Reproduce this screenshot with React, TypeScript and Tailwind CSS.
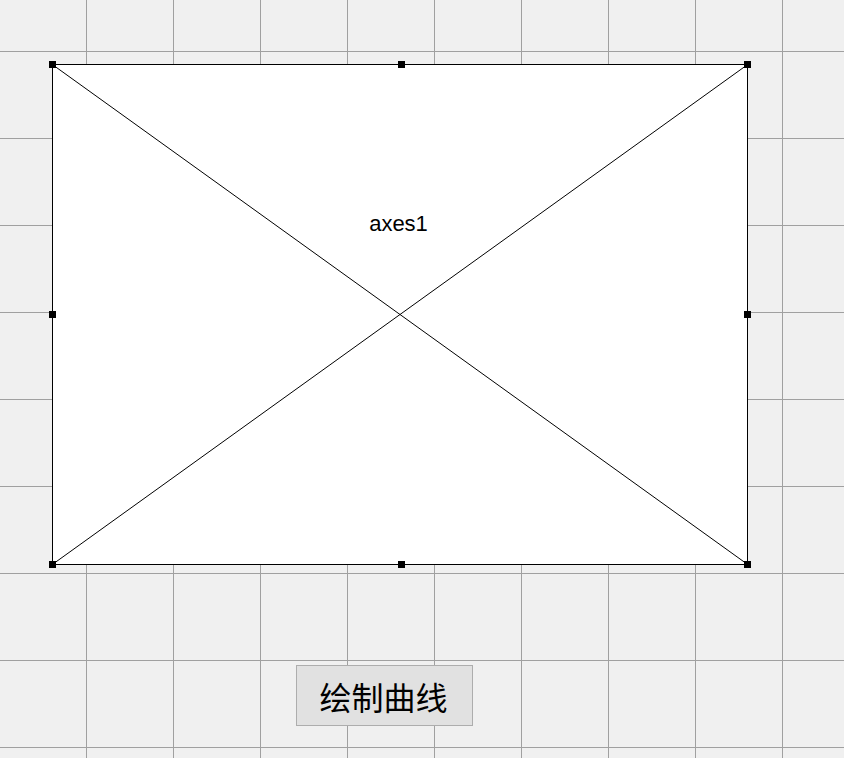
const HANDLES = [
  "left-[-4px] top-[-4px]",
  "left-[345px] top-[-4px]",
  "right-[-4px] top-[-4px]",
  "left-[-4px] top-[246px]",
  "right-[-4px] top-[246px]",
  "left-[-4px] bottom-[-4px]",
  "left-[345px] bottom-[-4px]",
  "right-[-4px] bottom-[-4px]",
];

function Axes() {
  return (
    <div className="absolute left-[52px] top-[64px] h-[501px] w-[696px] border border-black bg-white">
      <svg className="absolute inset-0 h-full w-full" viewBox="0 0 694 499" preserveAspectRatio="none">
        <line x1="0" y1="0" x2="694" y2="499" stroke="#000" strokeWidth="1" />
        <line x1="694" y1="0" x2="0" y2="499" stroke="#000" strokeWidth="1" />
      </svg>
      <div className="absolute left-0 right-0 top-[148px] pr-[3px] text-center font-['Liberation_Sans',Arial,sans-serif] text-[22px] leading-none text-black">
        axes1
      </div>
      {HANDLES.map((pos) => (
        <div key={pos} className={`absolute h-[7px] w-[7px] bg-black ${pos}`} />
      ))}
    </div>
  );
}

export default function App() {
  return (
    <div className="relative h-[758px] w-[844px] overflow-hidden bg-[#f0f0f0] bg-[linear-gradient(to_right,#a0a0a0_1px,transparent_1px),linear-gradient(to_bottom,#a0a0a0_1px,transparent_1px)] bg-[size:87px_87px] bg-[position:86px_51px]">
      <Axes />
      <button className="absolute left-[296px] top-[665px] flex h-[61px] w-[177px] items-center justify-center border border-[#adadad] bg-[#e1e1e1] pr-[2px] font-['Noto_Sans_CJK_SC',sans-serif] text-[32px] font-normal leading-none text-black">
        绘制曲线
      </button>
    </div>
  );
}
